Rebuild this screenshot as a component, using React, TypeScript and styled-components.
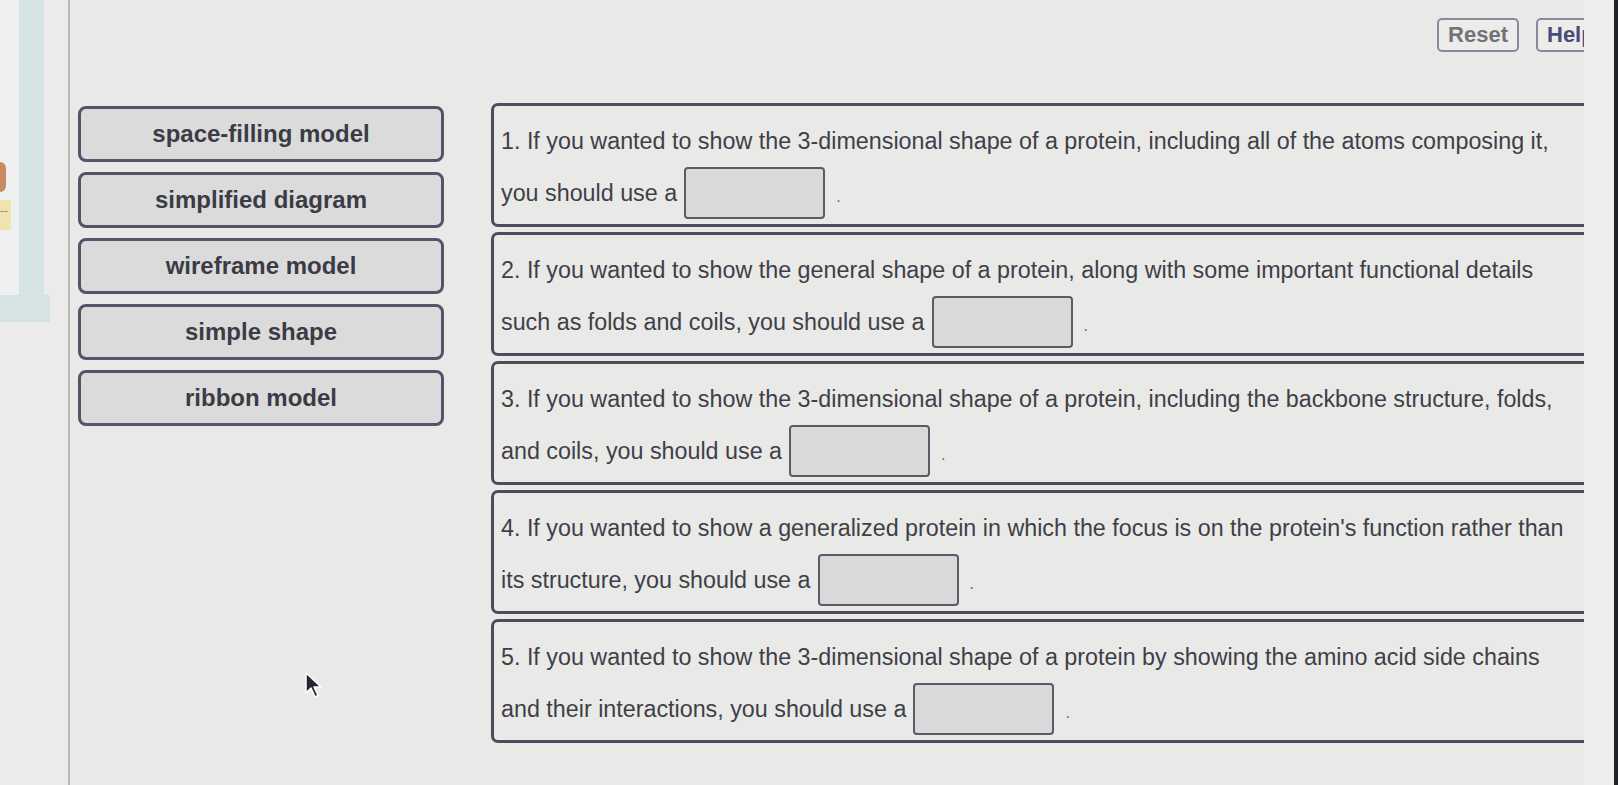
import React from "react";
import styled, { createGlobalStyle } from "styled-components";

const Global = createGlobalStyle`
  html, body { margin: 0; padding: 0; background: #e9e9e8; }
  body { font-family: "Liberation Sans", Arial, Helvetica, sans-serif; }
  * { box-sizing: border-box; }
`;

const Page = styled.div`
  position: relative;
  display: flex;
  width: 1618px;
  height: 785px;
  overflow: hidden;
  background: #e9e9e8;
`;

const Sidebar = styled.aside`
  flex: 0 0 70px;
  height: 100%;
  border-right: 2px solid #b9b9c0;
  background: #ebebea;
`;

const TealFrame = styled.div`
  display: flex;
  flex-direction: column;
  width: 50px;
  height: 322px;
`;

const TealTop = styled.div`
  flex: 1;
  display: flex;
`;

const TealInner = styled.div`
  width: 19px;
  display: flex;
  flex-direction: column;
  background: #eef0ef;
  padding-top: 162px;
  gap: 8px;
`;

const TealBand = styled.div`
  width: 25px;
  background: #d5e4e3;
`;

const TealBottom = styled.div`
  height: 27px;
  background: #d5e4e3;
`;

const OrangeBlob = styled.div`
  width: 6px;
  height: 30px;
  background: #c98a62;
  border-radius: 0 16px 16px 0;
`;

const Sticky = styled.div`
  width: 11px;
  height: 30px;
  background: #efe4b0;
  font-size: 7px;
  line-height: 8px;
  color: #555;
  padding-top: 8px;
  overflow: hidden;
`;

const Main = styled.main`
  flex: 0 0 1514px;
  overflow: hidden;
  padding-top: 18px;
  display: flex;
  flex-direction: column;
`;

const Toolbar = styled.div`
  display: flex;
  justify-content: flex-end;
  gap: 17px;
  margin-right: -16px;
  height: 34px;
`;

const ToolButton = styled.button<{ $tone?: "gray" | "blue" }>`
  height: 34px;
  padding: 0 9px;
  background: #ececeb;
  border: 2px solid #8b8999;
  border-radius: 5px;
  font-family: "Liberation Sans", Arial, sans-serif;
  font-weight: 700;
  font-size: 22px;
  color: ${(p) => (p.$tone === "blue" ? "#4a4a78" : "#727278")};
  width: ${(p) => (p.$tone === "blue" ? "64px" : "82px")};
  text-align: ${(p) => (p.$tone === "blue" ? "left" : "center")};
`;

const Content = styled.div`
  display: flex;
  gap: 47px;
  margin-top: 51px;
  padding-left: 8px;
`;

const Items = styled.div`
  flex: 0 0 366px;
  display: flex;
  flex-direction: column;
  gap: 10px;
  margin-top: 3px;
`;

const Item = styled.div`
  height: 56px;
  display: flex;
  align-items: center;
  justify-content: center;
  background: #dbdbdb;
  border: 3px solid #55526a;
  border-radius: 8px;
  font-weight: 700;
  font-size: 24px;
  color: #3b3b46;
  padding-bottom: 1px;
`;

const Questions = styled.div`
  flex: 0 0 1110px;
  display: flex;
  flex-direction: column;
  gap: 5px;
`;

const Panel = styled.section`
  height: 124px;
  border: 3px solid #4e4b5e;
  border-radius: 7px;
  padding: 20px 10px 0 7px;
  font-size: 23.3px;
  color: #3f3f47;
`;

const Line = styled.div`
  height: 30px;
  line-height: 30px;
  white-space: nowrap;
`;

const AnswerLine = styled.div`
  display: flex;
  align-items: center;
  gap: 7px;
  margin-top: 11px;
  white-space: nowrap;
`;

const DropBox = styled.div`
  width: 141px;
  height: 52px;
  background: #d9d9d9;
  border: 2px solid #5b5a68;
  border-radius: 4px;
`;

const Period = styled.span`
  margin-left: 4px;
  padding-top: 8px;
  font-size: 16px;
  color: #666;
`;

const RightGutter = styled.div`
  flex: 1;
  background: #eeeeed;
  border-right: 4px solid #1f242b;
`;

const Cursor = styled.svg`
  position: absolute;
  left: 304px;
  top: 671px;
  width: 20px;
  height: 28px;
`;

const items = [
  "space-filling model",
  "simplified diagram",
  "wireframe model",
  "simple shape",
  "ribbon model",
];

const questions: [string, string][] = [
  [
    "1. If you wanted to show the 3-dimensional shape of a protein, including all of the atoms composing it,",
    "you should use a",
  ],
  [
    "2. If you wanted to show the general shape of a protein, along with some important functional details",
    "such as folds and coils, you should use a",
  ],
  [
    "3. If you wanted to show the 3-dimensional shape of a protein, including the backbone structure, folds,",
    "and coils, you should use a",
  ],
  [
    "4. If you wanted to show a generalized protein in which the focus is on the protein's function rather than",
    "its structure, you should use a",
  ],
  [
    "5. If you wanted to show the 3-dimensional shape of a protein by showing the amino acid side chains",
    "and their interactions, you should use a",
  ],
];

export default function App() {
  return (
    <>
      <Global />
      <Page>
        <Sidebar>
          <TealFrame>
            <TealTop>
              <TealInner>
                <OrangeBlob />
                <Sticky>~~</Sticky>
              </TealInner>
              <TealBand />
            </TealTop>
            <TealBottom />
          </TealFrame>
        </Sidebar>
        <Main>
          <Toolbar>
            <ToolButton $tone="gray">Reset</ToolButton>
            <ToolButton $tone="blue">Help</ToolButton>
          </Toolbar>
          <Content>
            <Items>
              {items.map((t) => (
                <Item key={t}>{t}</Item>
              ))}
            </Items>
            <Questions>
              {questions.map(([a, b]) => (
                <Panel key={a}>
                  <Line>{a}</Line>
                  <AnswerLine>
                    <span>{b}</span>
                    <DropBox />
                    <Period>.</Period>
                  </AnswerLine>
                </Panel>
              ))}
            </Questions>
          </Content>
        </Main>
        <RightGutter />
        <Cursor viewBox="0 0 20 28">
          <path
            d="M2 2 L2 22 L7 17 L11 26 L14 24.5 L10 16 L17 16 Z"
            fill="#2a2230"
            stroke="#fff"
            strokeWidth="1.5"
            strokeLinejoin="round"
          />
        </Cursor>
      </Page>
    </>
  );
}
